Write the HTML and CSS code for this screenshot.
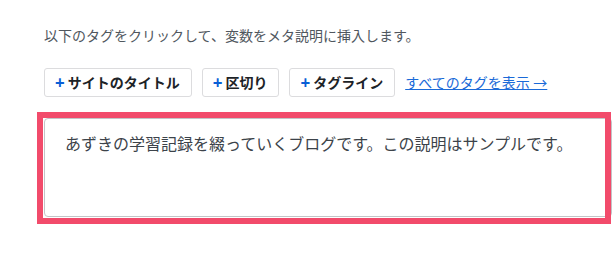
FILE: index.html
```html
<!DOCTYPE html>
<html lang="ja">
<head>
<meta charset="utf-8">
<link rel="stylesheet" href="styles.css">
</head>
<body>
<div class="panel">
  <p class="desc">以下のタグをクリックして、変数をメタ説明に挿入します。</p>
  <div class="tags">
    <button class="tag" type="button"><span class="plus">+</span>サイトのタイトル</button>
    <button class="tag" type="button"><span class="plus">+</span>区切り</button>
    <button class="tag" type="button"><span class="plus">+</span>タグライン</button>
    <a class="all" href="#">すべてのタグを表示 →</a>
  </div>
  <div class="field">
    <textarea class="input">あずきの学習記録を綴っていくブログです。この説明はサンプルです。</textarea>
  </div>
</div>
</body>
</html>
```
FILE: styles.css
```css
html, body {
  margin: 0;
  padding: 0;
  background: #ffffff;
}
body {
  font-family: "Noto Sans", "Noto Sans CJK JP", sans-serif;
}
.panel {
  padding: 25px 0 34px 43px;
}
.desc {
  margin: 0 0 22px 1px;
  font-size: 14px;
  line-height: 21px;
  color: #50575e;
}
.tags {
  display: flex;
  align-items: center;
  gap: 10px;
  margin-left: 1px;
}
.tag {
  display: flex;
  align-items: center;
  gap: 3px;
  height: 29px;
  box-sizing: border-box;
  padding: 0 11px 0 10px;
  border: 1px solid #dcdcde;
  border-radius: 3px;
  background: #ffffff;
  font-family: "Noto Sans", "Noto Sans CJK JP", sans-serif;
  font-size: 14px;
  font-weight: 700;
  line-height: 21px;
  color: #1d2327;
}
.plus {
  color: #0a5fd6;
  font-weight: 700;
  font-size: 17px;
  line-height: 21px;
}
.all {
  font-size: 14px;
  line-height: 21px;
  color: #1a6ad8;
  text-decoration: underline;
}
.field {
  margin-top: 21px;
  width: 562px;
  height: 100px;
  outline: 6px solid #f24b6b;
}
.input {
  display: block;
  margin: 0 0 0 1px;
  width: 568px;
  height: 99px;
  box-sizing: border-box;
  padding: 13px 20px;
  border: 1px solid #c3c4c7;
  border-radius: 4px;
  font-family: "Noto Sans", "Noto Sans CJK JP", sans-serif;
  font-size: 16px;
  line-height: 24px;
  color: #3c434a;
  resize: none;
  background: #ffffff;
}
```
